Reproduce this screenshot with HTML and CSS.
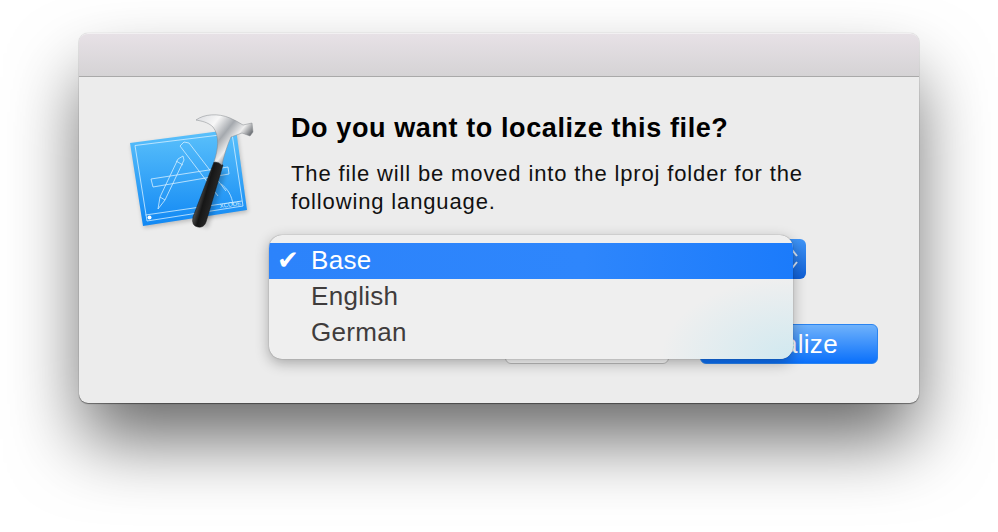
FILE: index.html
```html
<!DOCTYPE html>
<html lang="en">
<head>
  <meta charset="UTF-8">
  <title>Localize file</title>
  <link rel="stylesheet" href="styles.css">
</head>
<body>

<div class="window">
  <div class="titlebar"></div>
  <div class="content">
    <!-- Xcode icon -->
    <svg class="app-icon" viewBox="120 105 140 130" width="140" height="130">
      <defs>
        <linearGradient id="paper" x1="0" y1="0" x2="0" y2="1">
          <stop offset="0" stop-color="#5cc2fb"/>
          <stop offset="1" stop-color="#1188f4"/>
        </linearGradient>
        <linearGradient id="steel" x1="196" y1="115" x2="240" y2="150" gradientUnits="userSpaceOnUse">
          <stop offset="0" stop-color="#d8dade"/>
          <stop offset="0.35" stop-color="#f7f7f7"/>
          <stop offset="0.6" stop-color="#a5a9ae"/>
          <stop offset="0.8" stop-color="#eeeeee"/>
          <stop offset="1" stop-color="#5c6066"/>
        </linearGradient>
        <linearGradient id="grip" x1="195" y1="200" x2="216" y2="206" gradientUnits="userSpaceOnUse">
          <stop offset="0" stop-color="#6a6a6a"/>
          <stop offset="0.4" stop-color="#161616"/>
          <stop offset="1" stop-color="#303030"/>
        </linearGradient>
        <filter id="soft"><feGaussianBlur stdDeviation="2"/></filter>
      </defs>
      <polygon points="131,145 237,131 248,212 144,228" fill="#000" opacity=".2" filter="url(#soft)"/>
      <polygon points="130,143 236,129 247,210 143,226" fill="url(#paper)"/>
      <g fill="none" stroke="#d4efff" stroke-width=".8">
        <polygon points="135,145.500 232,133.500 243,206 147,221"/>
        <line x1="145.500" y1="215" x2="242" y2="201"/>
        <polygon points="151,179 228,167 229,174 153,187"/>
        <path d="M180,146 L184,142 L189,143 L226,191 M180,146 L218,196 M221,184 C228,189 232,196 233,205"/>
        <path d="M158,209 L160,197 L178,159 L183,156 L184,160 L165,200 Z M160,197 L165,200 M176,161 L183,165"/>
      </g>
      <circle cx="149.500" cy="217.500" r="2" fill="#fff"/>
      <text class="xcode-label" x="220" y="208" transform="rotate(-8 220 208)">XCODE</text>
      <path d="M214,170 L197,225 L208,228 L226,172 Z" fill="#000" opacity=".2" filter="url(#soft)"/>
      <path d="M214,162 L193,217 Q191,226 198,227 Q204,228 206,222 L223,165 Q218,161 214,162 Z" fill="url(#grip)" stroke="#111" stroke-width=".5"/>
      <path d="M196,120 C204,114 218,113 230,118 Q237,121 243,125 L252,123 L253,132 L250,136 L242,133 L231,137 C227,146 224,155 222,165 Q218,161 214,162 C218,150 220,136 213,127 C208,122 201,121 196,120 Z" fill="url(#steel)" stroke="#85888c" stroke-width=".5"/>
    </svg>

    <div class="message">
      <h1 class="heading">Do you want to localize this file?</h1>
      <p class="info">The file will be moved into the lproj folder for the following language.</p>
      <div class="select-row">
        <div class="lang-select">
          <svg class="arrows" viewBox="0 0 14 24" width="14" height="24">
            <path d="M3,9 L7,4 L11,9 M3,15 L7,20 L11,15" fill="none" stroke="#d8e4f4" stroke-width="2"/>
          </svg>
        </div>
      </div>
      <div class="buttons">
        <button class="btn btn-cancel">Cancel</button>
        <button class="btn btn-primary">Localize</button>
      </div>
    </div>
  </div>

  <!-- Open popup menu -->
  <ul class="menu">
    <li class="menu-item selected"><span class="check">✔</span>Base</li>
    <li class="menu-item">English</li>
    <li class="menu-item">German</li>
    <li class="menu-glow"></li>
  </ul>
</div>

</body>
</html>
```

FILE: styles.css
```css
html, body {
  margin: 0;
  height: 100%;
  overflow: hidden;
  background-color: #fff;
}
body {
  padding: 33px 79px 0;
  box-sizing: border-box;
  font-family: "Liberation Sans", Arial, sans-serif;
}
.window {
  position: relative;
  width: 840px;
  height: 370px;
  background-color: #ececec;
  border-radius: 9px;
  box-shadow: 0 0 1px rgba(0, 0, 0, .35), 0 1px 1px rgba(0, 0, 0, .4), 0 40px 72px -4px rgba(0, 0, 0, .6);
}
.titlebar {
  height: 44px;
  box-sizing: border-box;
  border-radius: 9px 9px 0 0;
  border-top: 1px solid #f2f0f2;
  border-bottom: 1px solid #a9a9a9;
  background: linear-gradient(#e7e1e6, #d5d3d5);
}
.content {
  display: flex;
  padding: 28px 41px 0 41px;
}
.app-icon {
  flex: none;
  margin-right: 31px;
}
.xcode-label {
  font-family: "Liberation Sans", Arial, sans-serif;
  font-size: 6px;
  fill: #d4efff;
}
.message {
  flex: 1;
  padding-top: 8px;
}
.heading {
  margin: 0;
  font-size: 27px;
  line-height: 30px;
  font-weight: 700;
  letter-spacing: .6px;
  color: #000;
}
.info {
  max-width: 530px;
  margin: 17px 0 0;
  font-size: 22px;
  line-height: 28px;
  letter-spacing: .86px;
  color: #111;
}
.select-row {
  display: flex;
  justify-content: flex-end;
  margin-top: 23px;
  padding-right: 72px;
}
.lang-select {
  display: flex;
  align-items: center;
  justify-content: flex-end;
  width: 300px;
  height: 40px;
  padding-right: 6px;
  box-sizing: border-box;
  border-radius: 6px;
  background: linear-gradient(#3f95f7, #0f5fd6);
}
.buttons {
  display: flex;
  justify-content: flex-end;
  gap: 31px;
  margin-top: 45px;
}
.btn {
  height: 40px;
  padding: 0;
  border-radius: 6px;
  font-family: "Liberation Sans", Arial, sans-serif;
  font-size: 26px;
  letter-spacing: .3px;
}
.btn-cancel {
  width: 164px;
  background: #fff;
  border: 1px solid #bdbdbd;
  color: #222;
}
.btn-primary {
  width: 178px;
  border: 1px solid #2a84f0;
  color: #fff;
  background: linear-gradient(#6fb2fb, #0a70fb);
}
.menu {
  position: absolute;
  left: 190px;
  top: 202px;
  width: 524px;
  height: 124px;
  margin: 0;
  padding: 8px 0 0;
  box-sizing: border-box;
  list-style: none;
  overflow: hidden;
  border-radius: 13px;
  background-color: #efefef;
  box-shadow: 0 0 1px rgba(0, 0, 0, .5), 0 4px 14px rgba(0, 0, 0, .3);
}
.menu-item {
  position: relative;
  height: 36px;
  padding-left: 42px;
  font-size: 26px;
  line-height: 34px;
  letter-spacing: .3px;
  color: #3f3c3c;
}
.menu-item.selected {
  color: #fff;
  background: linear-gradient(90deg, #2c83fb, #2e86fc 60%, #1b7bfb);
}
.check {
  position: absolute;
  left: 8px;
  top: 0;
  font-family: "DejaVu Sans", sans-serif;
  font-size: 26px;
}
.menu-glow {
  position: absolute;
  right: 0;
  bottom: 0;
  width: 130px;
  height: 80px;
  background: radial-gradient(ellipse at 100% 100%, rgba(205, 232, 240, .9), rgba(205, 232, 240, 0) 72%);
}
```
